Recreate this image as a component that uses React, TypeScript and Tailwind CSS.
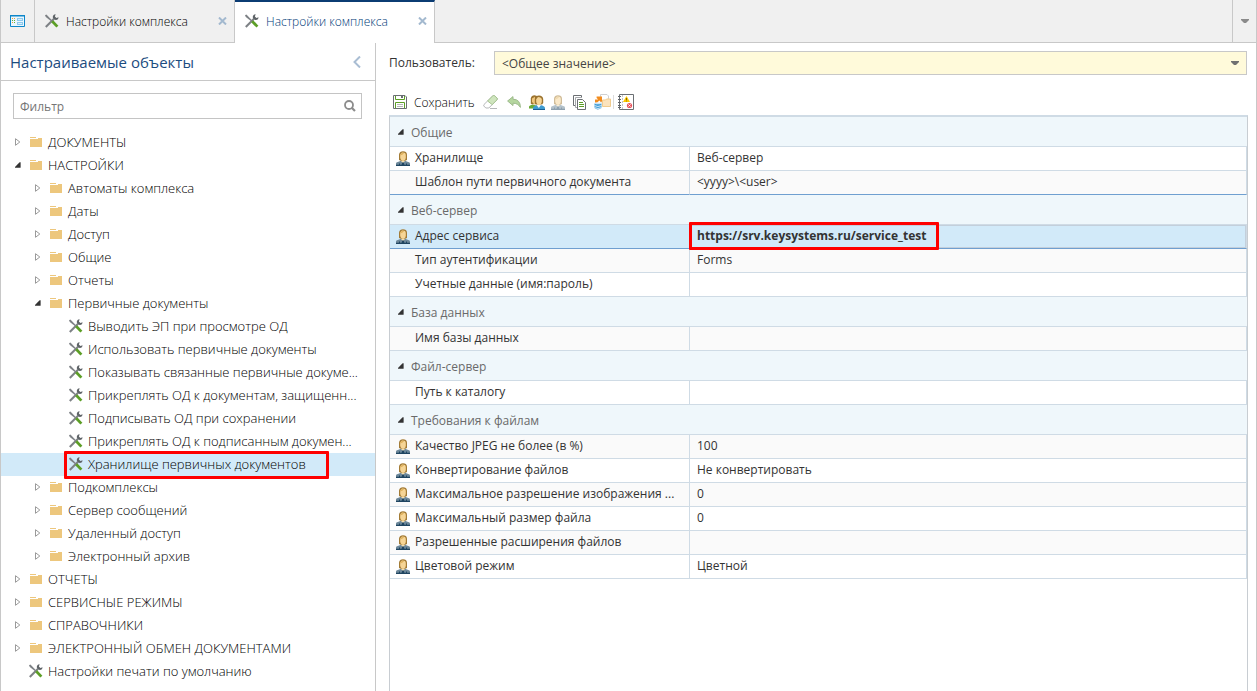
import React, { useState } from "react";
import clsx from "clsx";

/* ---------- Icons ---------- */

function ToolsIcon() {
  return (
    <svg width="14" height="14" viewBox="0 0 14 14" className="shrink-0" aria-hidden="true">
      <path d="M0 1.2 L1.4 0.4 L7.2 6.4 L6.2 7.2 L0.8 3 Z" fill="#7d8185" />
      <path d="M0.8 13 L8.8 5" stroke="#7d8185" strokeWidth="2" fill="none" />
      <path d="M10 0.2 L10.6 0.2 L9.9 2.4 L11.4 3.9 L13.6 3.2 Q13.6 5.8 11.2 6 Q7.6 6 7.8 2.6 Q8.2 0.6 10 0.2 Z" fill="#5f6468" />
      <path d="M7.2 7.2 L12.4 12.6" stroke="#5c9e26" strokeWidth="2.8" fill="none" />
    </svg>
  );
}

function FolderIcon() {
  return (
    <svg width="12" height="10" viewBox="0 0 12 10" className="shrink-0" shapeRendering="crispEdges" aria-hidden="true">
      <path d="M0 0 H6 V1 H0 Z M0 2 H8 V1 H12 V10 H0 Z" fill="#edc77d" />
    </svg>
  );
}

function ArrowIcon({ open }: { open: boolean }) {
  return open ? (
    <svg width="6" height="6" viewBox="0 0 6 6" aria-hidden="true">
      <path d="M5.6 0.2 V5.8 H0 V5 L4.6 0.2 Z" fill="#333" />
    </svg>
  ) : (
    <svg width="6" height="8" viewBox="0 0 6 8" aria-hidden="true">
      <path d="M0.5 0.7 V7.3 L4.8 4 Z" fill="#fff" stroke="#9a9a9a" />
    </svg>
  );
}

function PersonIcon({ faded = false }: { faded?: boolean }) {
  return (
    <svg width="14" height="15" viewBox="0 0 14 15" className={clsx("shrink-0", faded && "opacity-50")} aria-hidden="true">
      <path d="M0 15 V12.6 Q0 11.4 1.8 11 L5 9.8 H9 L12.2 11 Q14 11.4 14 12.6 V15 Z" fill="#6c8799" />
      <path d="M0 13.8 H3 V12.6 H4 V13.8 H10 V12.6 H11 V13.8 H14 V15 H0 Z" fill="#1f4561" />
      <path d="M4.6 9.6 L7 12.2 L9.4 9.6 Z" fill="#f5dfb0" />
      <path d="M6.2 11.4 H7.8 L8.6 15 H5.4 Z" fill="#1f4561" />
      <path d="M3 8.4 V3.4 Q3.6 0.2 7 0.2 Q10.6 0.2 11 3.4 V8.4 Q10.4 9.8 9 9.8 H5 Q3.6 9.8 3 8.4 Z" fill="#a37b35" />
      <path d="M4.2 3.6 L6 1.6 Q9.6 1.4 9.8 4 V6.6 Q9.4 9.8 7 10 Q4.8 9.8 4.2 6.6 Z" fill="#f6d596" />
      <path d="M4.2 3.4 Q5.6 1.4 8.4 1.8 Q7 4 4.2 4.6 Z" fill="#dfb15c" />
    </svg>
  );
}

function PeopleIcon() {
  return (
    <svg width="16" height="15" viewBox="0 0 16 15" aria-hidden="true">
      <path d="M0 13.6 V11.4 Q0.4 10.2 3.4 9.4 L9 11 V13.6 Z" fill="#6aaa35" />
      <path d="M1.8 8.8 V3.4 Q2.4 0.2 5.6 0.2 L8 1 V9.2 H3 Z" fill="#9c7430" />
      <path d="M3 3.6 L6 1.8 V9.2 Q3.4 8.6 3 6.6 Z" fill="#f0c67c" />
      <path d="M4 15 V12.6 Q4.2 11.2 8 10 H11.4 Q15.8 11.2 16 12.6 V15 Z" fill="#3f9bd0" />
      <path d="M4 14 H16 V15 H4 Z" fill="#1a5f94" />
      <path d="M7.4 9.8 L9.8 13 L12.2 9.8 Z" fill="#f5f8fa" />
      <path d="M5.8 8 V4 Q6.4 0.4 10 0.4 Q13.8 0.4 14.2 4 V8 Q13.4 9.6 12 9.6 H8 Q6.4 9.6 5.8 8 Z" fill="#9c7430" />
      <path d="M7.2 4.2 L9 2 Q12.6 2 12.8 4.6 V7 Q12.2 10 10 10.2 Q7.8 10 7.2 7 Z" fill="#f6d596" />
    </svg>
  );
}

function SaveIcon() {
  return (
    <svg width="14" height="14" viewBox="0 0 14 14" aria-hidden="true">
      <path d="M0.5 0.5 H12 L13.5 2 V13.5 H0.5 Z" fill="#fff" stroke="#6b6f73" />
      <path d="M2.5 1 V4.5 H11.5 V1" fill="none" stroke="#5c9e26" />
      <path d="M8 1 H10 V3 H8 Z" fill="#6b6f73" />
      <path d="M2.5 13 V7.5 H11.5 V13" fill="none" stroke="#5c9e26" />
      <path d="M4 9.5 H10 M4 11.5 H10" stroke="#b4b6b8" />
    </svg>
  );
}

function EraserIcon() {
  return (
    <svg width="16" height="14" viewBox="0 0 16 14" aria-hidden="true">
      <path d="M1 9.5 L9.8 0.8 Q10.6 0.2 11.6 0.8 L14 3 Q14.8 4 14 4.8 L5.8 13 H2.8 L0.8 11 Q0.4 10 1 9.5 Z" fill="#fff" stroke="#b5b7b9" />
      <path d="M4.6 6 L9.8 0.8 Q10.6 0.2 11.6 0.8 L14 3 Q14.8 4 14 4.8 L9.2 9.6 Z" fill="#cfe5be" stroke="#a6c490" />
      <path d="M7 13.5 H14" stroke="#b5b7b9" />
    </svg>
  );
}

function UndoIcon() {
  return (
    <svg width="14" height="12" viewBox="0 0 14 12" aria-hidden="true">
      <path d="M0.6 5 L6 0.6 V3.2 Q13.4 3.4 13.4 11.4 Q11 7.2 6 7.2 V9.6 Z" fill="#b5d69f" stroke="#9dba8c" />
    </svg>
  );
}

function CopyIcon() {
  return (
    <svg width="13" height="15" viewBox="0 0 13 15" aria-hidden="true">
      <path d="M2 10.5 H0.5 V0.5 H8.5 V2" fill="none" stroke="#6b6f73" />
      <path d="M4 12.5 H2.5 V2.5 H9" fill="none" stroke="#a6a9ac" />
      <path d="M4.5 4.5 H9.5 L12.5 7.5 V14.5 H4.5 Z" fill="#fff" stroke="#6b6f73" />
      <path d="M6 7.5 H10 M6 9.5 H11 M6 11.5 H11" stroke="#5c9e26" />
    </svg>
  );
}

function ExportIcon() {
  return (
    <svg width="17" height="16" viewBox="0 0 17 16" aria-hidden="true">
      <path d="M6.5 0.5 H13 L14.5 2 V8 H6.5 Z" fill="#fff" stroke="#cfd1d3" />
      <path d="M8.5 6 H11.5 L12.5 5 H16.5 V12.5 H8.5 Z" fill="#fbe3bd" stroke="#f0cb8e" />
      <path d="M1 8.6 V5.6 H4.2 L2.6 4 V2.6 H8 V7.8 H6.6 L5.4 6.6 L3.2 8.6 Z" fill="#f28c1e" />
      <path d="M0.5 9.4 V14 Q3.5 16.8 7.5 14 V9.4 Z" fill="#3a9ad6" />
      <path d="M0.5 9.4 Q3.8 7.6 7.5 9.4 Q3.8 11.2 0.5 9.4 Z" fill="#cfe8f8" />
      <path d="M0.5 11.6 Q3.8 13.4 7.5 11.6 M0.5 13.6 Q3.8 15.4 7.5 13.6" stroke="#fff" strokeWidth="0.8" fill="none" />
    </svg>
  );
}

function LogIcon() {
  return (
    <svg width="16" height="16" viewBox="0 0 16 16" aria-hidden="true">
      <path d="M1.5 0.5 H15.5 V15.5 H1.5 Z" fill="#fff" stroke="#6b6f73" />
      <path d="M4.5 1 V15" stroke="#c4c6c8" strokeDasharray="2 1" />
      <path d="M0 2.5 H3 M0 5.5 H3 M0 8.5 H3 M0 11.5 H3 M0 13.5 H3" stroke="#5f6368" />
      <path d="M8.5 2 L12 8 H5 Z" fill="#fdc800" />
      <path d="M8.5 4 V6 M8.5 6.6 V7.4" stroke="#7a5c00" strokeWidth="0.9" />
      <circle cx="11.5" cy="11.5" r="2.6" fill="#e9545d" />
      <path d="M10.3 10.3 L12.7 12.7 M12.7 10.3 L10.3 12.7" stroke="#fff" strokeWidth="0.8" />
    </svg>
  );
}

function DashboardIcon() {
  return (
    <svg width="15" height="12" viewBox="0 0 15 12" aria-hidden="true">
      <path d="M0.5 0.5 H14.5 V11.5 H0.5 Z" fill="#eaf6fd" stroke="#0d86c9" />
      <path d="M0 0 H15 V1.5 H0 Z" fill="#0d86c9" />
      <path d="M7 3 H13 V6 H7 Z M7 7 H13 V10 H7 Z" fill="#8cc9ee" />
      <path d="M8 4.5 H12 M8 8.5 H12" stroke="#d9effb" />
      <path d="M2 3 H3 V4 H2 Z M4 3 H5 V4 H4 Z M2 7 H3 V8 H2 Z" fill="#e8a33a" />
      <path d="M2 5 H3 V6 H2 Z M4 5 H5 V6 H4 Z M4 7 H5 V8 H4 Z" fill="#5fae3a" />
    </svg>
  );
}

function CloseIcon() {
  return (
    <svg width="9" height="8" viewBox="0 0 9 8" aria-hidden="true">
      <path d="M1 0.5 L8 7.5 M8 0.5 L1 7.5" stroke="#a3b9cf" strokeWidth="2" />
    </svg>
  );
}

function CaretIcon({ className }: { className: string }) {
  return (
    <svg width="8" height="4" viewBox="0 0 8 4" className={className} aria-hidden="true">
      <path d="M0 0 H8 V1 L5 4 H3 L0 1 Z" fill="currentColor" />
    </svg>
  );
}

/* ---------- Tabs ---------- */

function Tab({ title, active = false }: { title: string; active?: boolean }) {
  return (
    <div
      className={clsx(
        "flex h-full w-[200px] items-center border-r border-[#c8c8c8] pl-2.5 pr-[7px]",
        active ? "border-t-2 border-t-[#0b3c73] bg-white pb-[3px] text-[#003a78]" : "border-b bg-[#f0f0f0] text-black"
      )}
    >
      <button type="button" role="tab" aria-selected={active} className="flex flex-1 items-center gap-[7px] text-left font-light">
        <ToolsIcon />
        <span className="pt-0.5">{title}</span>
      </button>
      <button type="button" aria-label="Закрыть">
        <CloseIcon />
      </button>
    </div>
  );
}

/* ---------- Tree of objects ---------- */

interface TreeNode {
  title: string;
  leaf?: boolean;
  children?: TreeNode[];
}

const tree: TreeNode[] = [
  { title: "ДОКУМЕНТЫ" },
  {
    title: "НАСТРОЙКИ",
    children: [
      { title: "Автоматы комплекса" },
      { title: "Даты" },
      { title: "Доступ" },
      { title: "Общие" },
      { title: "Отчеты" },
      {
        title: "Первичные документы",
        children: [
          { title: "Выводить ЭП при просмотре ОД", leaf: true },
          { title: "Использовать первичные документы", leaf: true },
          { title: "Показывать связанные первичные докуме...", leaf: true },
          { title: "Прикреплять ОД к документам, защищенн...", leaf: true },
          { title: "Подписывать ОД при сохранении", leaf: true },
          { title: "Прикреплять ОД к подписанным докумен...", leaf: true },
          { title: "Хранилище первичных документов", leaf: true },
        ],
      },
      { title: "Подкомплексы" },
      { title: "Сервер сообщений" },
      { title: "Удаленный доступ" },
      { title: "Электронный архив" },
    ],
  },
  { title: "ОТЧЕТЫ" },
  { title: "СЕРВИСНЫЕ РЕЖИМЫ" },
  { title: "СПРАВОЧНИКИ" },
  { title: "ЭЛЕКТРОННЫЙ ОБМЕН ДОКУМЕНТАМИ" },
  { title: "Настройки печати по умолчанию", leaf: true },
];

const indents = ["pl-[11px]", "pl-[31px]", "pl-[51px]"];

interface TreeItemProps {
  node: TreeNode;
  level: number;
  selected: string;
  onSelect: (title: string) => void;
}

function TreeItem({ node, level, selected, onSelect }: TreeItemProps) {
  const [open, setOpen] = useState(!!node.children);
  const isSelected = node.title === selected;

  return (
    <li role="treeitem" aria-expanded={node.leaf ? undefined : open} aria-selected={isSelected}>
      <div className={clsx("flex h-[23px] items-center pb-0.5", indents[level], isSelected && "bg-[#d2eaf9]")}>
        {node.leaf ? (
          <span className="w-[17px] shrink-0" />
        ) : (
          <button
            type="button"
            aria-label={open ? "Свернуть" : "Развернуть"}
            onClick={() => setOpen(!open)}
            className="flex w-[18px] shrink-0 pl-[3px]"
          >
            <ArrowIcon open={open} />
          </button>
        )}
        <button
          type="button"
          onClick={() => onSelect(node.title)}
          className={clsx("relative flex items-center whitespace-nowrap", node.leaf ? "gap-[5px]" : "gap-1.5")}
        >
          {node.leaf ? <ToolsIcon /> : <FolderIcon />}
          {node.title}
          {isSelected && (
            <span className="pointer-events-none absolute -bottom-1.5 -left-[5px] -right-[23px] -top-1 rounded-[1px] border-3 border-[#ff0000]" />
          )}
        </button>
      </div>
      {open && node.children && (
        <ul role="group">
          {node.children.map((child) => (
            <TreeItem key={child.title} node={child} level={level + 1} selected={selected} onSelect={onSelect} />
          ))}
        </ul>
      )}
    </li>
  );
}

function ObjectsPanel() {
  const [selected, setSelected] = useState("Хранилище первичных документов");

  return (
    <aside className="w-[375px] shrink-0 border-r border-[#c8c8c8] text-[13px]">
      <div className="flex h-[38px] items-center justify-between border-b border-[#c8c8c8] pl-[9px] pr-3.5">
        <h1 className="text-[15px] text-[#1c4c80]">Настраиваемые объекты</h1>
        <button type="button" aria-label="Свернуть панель">
          <svg width="8" height="12" viewBox="0 0 8 12" aria-hidden="true">
            <path d="M7 0.5 L1.5 6 L7 11.5" stroke="#a9bdd3" strokeWidth="2" fill="none" />
          </svg>
        </button>
      </div>
      <div className="my-3 ml-3 mr-[13px] flex h-[26px] items-center border border-[#c4c4c4] pl-1.5 pr-[5px]">
        <input
          type="text"
          aria-label="Фильтр"
          placeholder="Фильтр"
          className="min-w-0 flex-1 pt-0.5 text-xs outline-none placeholder:text-[#757575]"
        />
        <button type="button" aria-label="Найти">
          <svg width="12" height="12" viewBox="0 0 12 12" aria-hidden="true">
            <circle cx="5" cy="5" r="4" stroke="#8c8c8c" strokeWidth="1.8" fill="none" />
            <path d="M8 8 L11 11" stroke="#8c8c8c" strokeWidth="2.2" />
          </svg>
        </button>
      </div>
      <ul role="tree" className="font-light text-black">
        {tree.map((node) => (
          <TreeItem key={node.title} node={node} level={0} selected={selected} onSelect={setSelected} />
        ))}
      </ul>
    </aside>
  );
}

/* ---------- Property grid ---------- */

interface Property {
  name: string;
  value?: string;
  user?: boolean;
  striped?: boolean;
  active?: boolean;
}

const groups: { title: string; items: Property[] }[] = [
  {
    title: "Общие",
    items: [
      { name: "Хранилище", value: "Веб-сервер", user: true },
      { name: "Шаблон пути первичного документа", value: "<yyyy>\\<user>", striped: true },
    ],
  },
  {
    title: "Веб-сервер",
    items: [
      { name: "Адрес сервиса", value: "https://srv.keysystems.ru/service_test", user: true, active: true },
      { name: "Тип аутентификации", value: "Forms", striped: true },
      { name: "Учетные данные (имя:пароль)" },
    ],
  },
  { title: "База данных", items: [{ name: "Имя базы данных", striped: true }] },
  { title: "Файл-сервер", items: [{ name: "Путь к каталогу" }] },
  {
    title: "Требования к файлам",
    items: [
      { name: "Качество JPEG не более (в %)", value: "100", user: true, striped: true },
      { name: "Конвертирование файлов", value: "Не конвертировать", user: true },
      { name: "Максимальное разрешение изображения ...", value: "0", user: true, striped: true },
      { name: "Максимальный размер файла", value: "0", user: true },
      { name: "Разрешенные расширения файлов", user: true, striped: true },
      { name: "Цветовой режим", value: "Цветной", user: true },
    ],
  },
];

function PropertyGroup({ title, items, beforeActive }: { title: string; items: Property[]; beforeActive: boolean }) {
  const [open, setOpen] = useState(true);

  return (
    <tbody>
      <tr className="h-[30px] bg-[#eff7fb]">
        <th colSpan={2} scope="colgroup" className="border-b border-[#cfdbe5] p-0 text-left font-normal">
          <button
            type="button"
            aria-expanded={open}
            onClick={() => setOpen(!open)}
            className="flex items-center gap-[7px] pl-2 text-[#6a6a6a]"
          >
            <ArrowIcon open={open} />
            <span className="pt-0.5">{title}</span>
          </button>
        </th>
      </tr>
      {open &&
        items.map((item, i) => {
          const border = item.active || (beforeActive && i === items.length - 1) ? "border-b-[#6f9fd0]" : "border-b-[#cfdbe5]";
          return (
            <tr
              key={item.name}
              className={clsx("h-6", item.active ? "bg-[#d2eaf9]" : item.striped ? "bg-[#fafafa]" : "bg-white")}
            >
              <th scope="row" className={clsx("border-b border-r border-r-[#cfdbe5] p-0 text-left font-normal", border)}>
                <div className={clsx("flex h-[23px] items-center whitespace-nowrap", item.user ? "gap-[5px] pl-1.5" : "pl-[25px]")}>
                  {item.user && <PersonIcon />}
                  <span className="pb-0.5">{item.name}</span>
                </div>
              </th>
              <td
                className={clsx(
                  "relative border-b border-r border-r-[#cfdbe5] p-0 pb-0.5 pl-[7px]",
                  border,
                  item.active && "font-bold shadow-[inset_-1px_1px_0_#c3cfdb,inset_0_-1px_0_#c3cfdb]"
                )}
              >
                {item.value}
                {item.active && (
                  <span className="pointer-events-none absolute -left-px -top-[3px] h-7 w-[250px] rounded-[1px] border-3 border-[#ff0000]" />
                )}
              </td>
            </tr>
          );
        })}
    </tbody>
  );
}

function Toolbar() {
  return (
    <div role="toolbar" className="flex h-[26px] items-center pl-1 text-black">
      <button type="button" className="flex items-center gap-[7px] font-light">
        <SaveIcon />
        <span className="pt-0.5">Сохранить</span>
      </button>
      <button type="button" aria-label="Очистить" className="ml-2">
        <EraserIcon />
      </button>
      <button type="button" aria-label="Отменить" className="ml-2">
        <UndoIcon />
      </button>
      <button type="button" aria-label="Пользователи" className="ml-2">
        <PeopleIcon />
      </button>
      <button type="button" aria-label="Пользователь" className="ml-1.5">
        <PersonIcon faded />
      </button>
      <button type="button" aria-label="Копировать" className="ml-2">
        <CopyIcon />
      </button>
      <button type="button" aria-label="Выгрузить" className="ml-2">
        <ExportIcon />
      </button>
      <span className="ml-0.5 h-3.5 w-px bg-[#dcdcdc]" />
      <button type="button" aria-label="Протокол" className="ml-1">
        <LogIcon />
      </button>
    </div>
  );
}

function SettingsPanel() {
  return (
    <main className="flex min-w-0 flex-1 flex-col pl-[13px] pr-2 pt-2">
      <div className="flex items-center">
        <label htmlFor="user" className="w-[105px] shrink-0">
          Пользователь:
        </label>
        <div className="relative mr-px flex-1">
          <select
            id="user"
            className="block h-6 w-full appearance-none border border-[#c8c8c8] bg-[#fffada] pl-[7px] pt-0.5 text-[#444] outline-none"
          >
            <option>&lt;Общее значение&gt;</option>
          </select>
          <CaretIcon className="pointer-events-none absolute right-2 top-2.5 text-[#707070]" />
        </div>
      </div>
      <div className="mt-3.5">
        <Toolbar />
      </div>
      <div className="flex-1 border-x border-t-2 border-[#c8cdd2] border-t-[#cfdbe5]">
        <table className="w-full table-fixed border-separate border-spacing-0">
          <colgroup>
            <col className="w-[300px]" />
            <col />
          </colgroup>
          {groups.map((group, i) => (
            <PropertyGroup
              key={group.title}
              title={group.title}
              items={group.items}
              beforeActive={!!groups[i + 1]?.items[0].active}
            />
          ))}
        </table>
      </div>
    </main>
  );
}

export default function App() {
  return (
    <div className="flex min-h-screen flex-col border-x border-[#c8c8c8] bg-white font-['Open_Sans','Noto_Sans',sans-serif] text-xs leading-[18px] text-[#333]">
      <header className="flex h-[43px] bg-[#f0f0f0]">
        <button type="button" aria-label="Рабочий стол" className="flex w-[34px] items-center justify-center border-b border-r border-[#c8c8c8]">
          <DashboardIcon />
        </button>
        <div role="tablist" className="flex">
          <Tab title="Настройки комплекса" />
          <Tab title="Настройки комплекса" active />
        </div>
        <div className="flex-1 border-b border-[#c8c8c8]" />
        <button type="button" aria-label="Список вкладок" className="flex w-6 items-center justify-center border-b border-l border-[#c8c8c8]">
          <CaretIcon className="text-[#8a8a8a]" />
        </button>
      </header>
      <div className="flex flex-1">
        <ObjectsPanel />
        <SettingsPanel />
      </div>
    </div>
  );
}
